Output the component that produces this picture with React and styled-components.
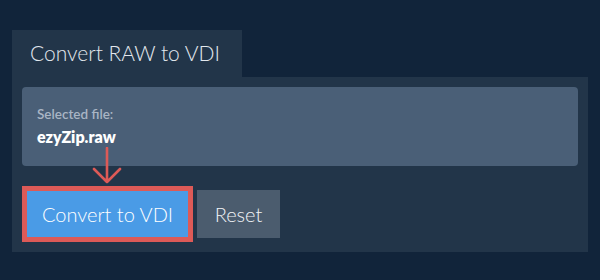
import React from "react";
import styled, { createGlobalStyle } from "styled-components";

const Global = createGlobalStyle`
  html, body { margin: 0; padding: 0; background: #11243a; }
  body { font-family: Lato, "Open Sans", sans-serif; }
`;

const Page = styled.div`
  width: 600px;
  height: 280px;
  box-sizing: border-box;
  padding: 30px 12px 0 12px;
  display: flex;
  flex-direction: column;
`;

const Tab = styled.div`
  align-self: flex-start;
  width: 230px;
  height: 47px;
  box-sizing: border-box;
  background: #223549;
  color: #e3e8ee;
  font-size: 21px;
  font-weight: 300;
  padding: 8px 0 0 18px;
  line-height: 30px;
`;

const Panel = styled.div`
  background: #223549;
  height: 175px;
  box-sizing: border-box;
  padding: 10px 10px 0 10px;
  display: flex;
  flex-direction: column;
`;

const FileBox = styled.div`
  background: #4a5f77;
  border-radius: 4px;
  height: 79px;
  box-sizing: border-box;
  padding: 19px 15px 0 15px;
  display: flex;
  flex-direction: column;
`;

const Label = styled.div`
  color: #a9b5c4;
  font-size: 13.5px;
  font-weight: 600;
  line-height: 16px;
`;

const FileName = styled.div`
  color: #ffffff;
  font-size: 16px;
  font-weight: 800;
  line-height: 20px;
  margin-top: 5px;
`;

const ButtonRow = styled.div`
  position: relative;
  display: flex;
  align-items: center;
  gap: 4px;
  margin-top: 20px;
`;

const Arrow = styled.svg`
  position: absolute;
  left: 70px;
  top: -39px;
`;

const PrimaryButton = styled.button`
  width: 171px;
  height: 56px;
  box-sizing: border-box;
  border: 5px solid #dd5a57;
  background: #4a9be6;
  color: #ffffff;
  font-family: Lato, sans-serif;
  font-size: 20px;
  font-weight: 300;
  padding: 0;
`;

const SecondaryButton = styled.button`
  width: 83px;
  height: 48px;
  box-sizing: border-box;
  border: none;
  background: #4b5c6e;
  color: #f1f4f7;
  font-family: Lato, sans-serif;
  font-size: 20px;
  font-weight: 300;
  padding: 0;
`;

export default function App() {
  return (
    <>
      <Global />
      <Page>
        <Tab>Convert RAW to VDI</Tab>
        <Panel>
          <FileBox>
            <Label>Selected file:</Label>
            <FileName>ezyZip.raw</FileName>
          </FileBox>
          <ButtonRow>
            <Arrow width="30" height="38" viewBox="0 0 30 38">
              <path d="M15 1 V35 M2 22 L15 35 L28 22" stroke="#dd5a57" strokeWidth="2.6" fill="none" strokeLinecap="round" strokeLinejoin="round" />
            </Arrow>
            <PrimaryButton>Convert to VDI</PrimaryButton>
            <SecondaryButton>Reset</SecondaryButton>
          </ButtonRow>
        </Panel>
      </Page>
    </>
  );
}
